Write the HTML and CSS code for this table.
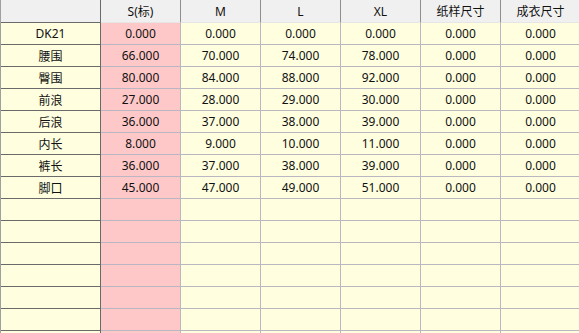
FILE: index.html
```html
<!DOCTYPE html>
<html>
<head>
<meta charset="utf-8">
<link rel="stylesheet" href="styles.css">
</head>
<body>
<div class="grid">
  <div class="hd first"></div><div class="hd">S(标)</div><div class="hd">M</div><div class="hd">L</div><div class="hd">XL</div><div class="hd">纸样尺寸</div><div class="hd">成衣尺寸</div>

  <div class="c first">DK21</div><div class="c base">0.000</div><div class="c">0.000</div><div class="c">0.000</div><div class="c">0.000</div><div class="c">0.000</div><div class="c">0.000</div>
  <div class="c first">腰围</div><div class="c base">66.000</div><div class="c">70.000</div><div class="c">74.000</div><div class="c">78.000</div><div class="c">0.000</div><div class="c">0.000</div>
  <div class="c first">臀围</div><div class="c base">80.000</div><div class="c">84.000</div><div class="c">88.000</div><div class="c">92.000</div><div class="c">0.000</div><div class="c">0.000</div>
  <div class="c first">前浪</div><div class="c base">27.000</div><div class="c">28.000</div><div class="c">29.000</div><div class="c">30.000</div><div class="c">0.000</div><div class="c">0.000</div>
  <div class="c first">后浪</div><div class="c base">36.000</div><div class="c">37.000</div><div class="c">38.000</div><div class="c">39.000</div><div class="c">0.000</div><div class="c">0.000</div>
  <div class="c first">内长</div><div class="c base">8.000</div><div class="c">9.000</div><div class="c">10.000</div><div class="c">11.000</div><div class="c">0.000</div><div class="c">0.000</div>
  <div class="c first">裤长</div><div class="c base">36.000</div><div class="c">37.000</div><div class="c">38.000</div><div class="c">39.000</div><div class="c">0.000</div><div class="c">0.000</div>
  <div class="c first">脚口</div><div class="c base">45.000</div><div class="c">47.000</div><div class="c">49.000</div><div class="c">51.000</div><div class="c">0.000</div><div class="c">0.000</div>

  <div class="c first"></div><div class="c base"></div><div class="c"></div><div class="c"></div><div class="c"></div><div class="c"></div><div class="c"></div>
  <div class="c first"></div><div class="c base"></div><div class="c"></div><div class="c"></div><div class="c"></div><div class="c"></div><div class="c"></div>
  <div class="c first"></div><div class="c base"></div><div class="c"></div><div class="c"></div><div class="c"></div><div class="c"></div><div class="c"></div>
  <div class="c first"></div><div class="c base"></div><div class="c"></div><div class="c"></div><div class="c"></div><div class="c"></div><div class="c"></div>
  <div class="c first"></div><div class="c base"></div><div class="c"></div><div class="c"></div><div class="c"></div><div class="c"></div><div class="c"></div>
  <div class="c first"></div><div class="c base"></div><div class="c"></div><div class="c"></div><div class="c"></div><div class="c"></div><div class="c"></div>
  <div class="c first"></div><div class="c base"></div><div class="c"></div><div class="c"></div><div class="c"></div><div class="c"></div><div class="c"></div>
</div>
</body>
</html>
```

FILE: styles.css
```css
html, body {
  margin: 0;
  padding: 0;
  background: #ffffe0;
  overflow: hidden;
}
.grid {
  display: grid;
  grid-template-columns: 100px repeat(6, 80px);
  grid-auto-rows: 22px;
  grid-template-rows: 23px;
  width: 580px;
  height: 333px;
  overflow: hidden;
  border-left: 1px solid #a0a0a0;
  font-family: "Noto Sans", "Noto Sans CJK SC", sans-serif;
  font-size: 12px;
  color: #111;
}
.hd, .c {
  box-sizing: border-box;
  display: flex;
  align-items: center;
  justify-content: center;
  white-space: nowrap;
}
.hd {
  background: #f0f0f0;
  border-right: 1px solid #8e8e8e;
  border-bottom: 1px solid #e6e6e6;
}
.c {
  background: #ffffe0;
  border-right: 1px solid #bab6c2;
  border-bottom: 1px solid #bab6c2;
}
.first {
  border-right: 1px solid #6a6a6a;
  border-bottom: 1px solid #6a6a6a;
}
.base {
  background: #ffc8c8;
}
```
